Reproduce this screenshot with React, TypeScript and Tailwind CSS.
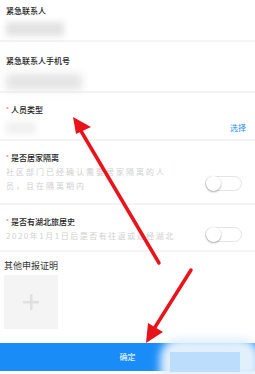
const font = { fontFamily: '"Noto Sans CJK SC", "Noto Sans", sans-serif' };

const Toggle = () => (
  <div className="w-[37px] h-[15px] rounded-full border border-[#e4e4e4] bg-white relative shrink-0">
    <div className="absolute left-0 top-[-1px] w-[15px] h-[15px] rounded-full bg-white shadow-[0_1px_2px_rgba(0,0,0,0.35)]" />
  </div>
);

const Label = ({ text, required }: { text: string; required?: boolean }) => (
  <div className="flex items-start text-[8px] leading-[10px] text-[#222] font-medium">
    {required && <span className="text-[#f56c6c] text-[6px] mr-[2px]">*</span>}
    <span>{text}</span>
  </div>
);

export default function App() {
  return (
    <div className="relative w-[255px] h-[374px] bg-white overflow-hidden" style={font}>
      <div className="flex flex-col">
        <div className="h-[42px] px-[6px] pt-[6px] border-b-2 border-[#f4f4f4]">
          <Label text="紧急联系人" />
          <div className="mt-[6px] w-[58px] h-[14px] bg-[#e2e2e2] blur-[3px]" />
        </div>
        <div className="h-[51px] px-[6px] pt-[14px] border-b-2 border-[#f4f4f4]">
          <Label text="紧急联系人手机号" />
          <div className="mt-[8px] w-[76px] h-[16px] bg-[#e4e4e4] blur-[4px]" />
        </div>
        <div className="h-[48px] px-[6px] pt-[12px] border-b-2 border-[#f4f4f4] relative">
          <Label text="人员类型" required />
          <div className="flex items-center justify-between mt-[7px]">
            <div className="w-[30px] h-[12px] bg-[#f0f0f0] blur-[3px]" />
            <span className="text-[8px] text-[#2d8cf0] mr-[3px]">选择</span>
          </div>
        </div>
        <div className="h-[64px] px-[6px] pt-[12px] border-b-2 border-[#f4f4f4] flex flex-col">
          <Label text="是否居家隔离" required />
          <div className="flex items-center justify-between">
            <div className="text-[8px] leading-[14px] tracking-[2px] text-[#cfcfcf] mt-[2px]">
              社区部门已经确认需要居家隔离的人<br />员，且在隔离期内
            </div>
            <div className="mr-[7px] mt-[10px]"><Toggle /></div>
          </div>
        </div>
        <div className="h-[47px] px-[6px] pt-[12px] border-b-2 border-[#f4f4f4] flex flex-col">
          <Label text="是否有湖北旅居史" required />
          <div className="flex items-center justify-between">
            <div className="text-[8px] leading-[12px] tracking-[1.5px] text-[#cfcfcf] mt-[3px]">2020年1月1日后是否有往返或途经湖北</div>
            <div className="mr-[7px]"><Toggle /></div>
          </div>
        </div>
        <div className="h-[91px] px-[4px] pt-[9px]">
          <div className="text-[9px] leading-[10px] text-[#333]">其他申报证明</div>
          <div className="mt-[4px] w-[54px] h-[54px] bg-[#f4f4f4] flex items-center justify-center">
            <svg width="16" height="16" viewBox="0 0 16 16">
              <rect x="7" y="0" width="2.5" height="16" fill="#e0e0e0" />
              <rect x="0" y="7" width="16" height="2.5" fill="#e0e0e0" />
            </svg>
          </div>
        </div>
        <div className="h-[28px] bg-[#1a8cf8] flex items-center justify-center">
          <span className="text-[8px] text-white">确定</span>
        </div>
      </div>

      <div className="absolute left-[160px] top-[338px] w-[100px] h-[40px] bg-[#e2f0fc] blur-[4px] rounded-t-[20px]" />
      <div className="absolute left-[170px] top-[352px] w-[70px] h-[20px] bg-[#b3d8fb] opacity-80" />

      <svg className="absolute inset-0 pointer-events-none" width="255" height="374" viewBox="0 0 255 374">
        <line x1="159" y1="263" x2="78" y2="126" stroke="#e8141c" strokeWidth="3.5" strokeLinecap="round" />
        <polygon points="73,117 91,127 76,134" fill="#e8141c" />
        <line x1="191" y1="270" x2="152" y2="332" stroke="#e8141c" strokeWidth="3.5" strokeLinecap="round" />
        <polygon points="146,343 148,323 163,332" fill="#e8141c" />
      </svg>
    </div>
  );
}
